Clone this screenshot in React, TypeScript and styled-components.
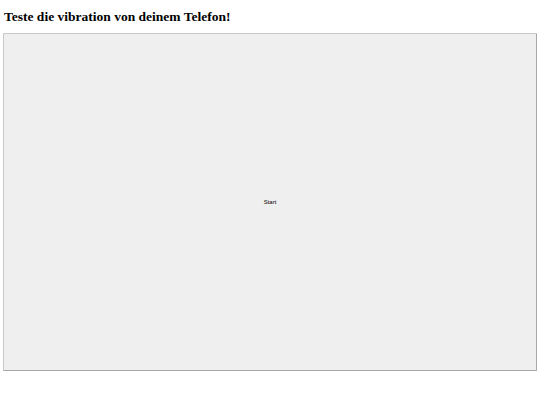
import styled, { createGlobalStyle } from 'styled-components';

const GlobalStyle = createGlobalStyle`
  html, body {
    margin: 0;
    padding: 0;
    background: #ffffff;
  }
`;

const Page = styled.div`
  padding: 0 3px;
  display: flex;
  flex-direction: column;
`;

const Title = styled.h3`
  margin: 9px 0 0 1px;
  height: 24px;
  font-family: 'Liberation Serif', 'Times New Roman', serif;
  font-size: 13.5px;
  font-weight: bold;
  line-height: 16px;
  color: #000;
`;

const StartButton = styled.button`
  width: 534px;
  height: 338px;
  box-sizing: border-box;
  background: #efefef;
  border: 1px solid #c8c8c8;
  border-right-color: #a8a8a8;
  border-bottom-color: #a8a8a8;
  border-radius: 1px;
  font-family: 'Liberation Sans', Arial, sans-serif;
  font-size: 6px;
  color: #000;
  padding: 0;
  cursor: pointer;
`;

function App() {
  return (
    <>
      <GlobalStyle />
      <Page>
        <Title>Teste die vibration von deinem Telefon!</Title>
        <StartButton>Start</StartButton>
      </Page>
    </>
  );
}

export default App;
